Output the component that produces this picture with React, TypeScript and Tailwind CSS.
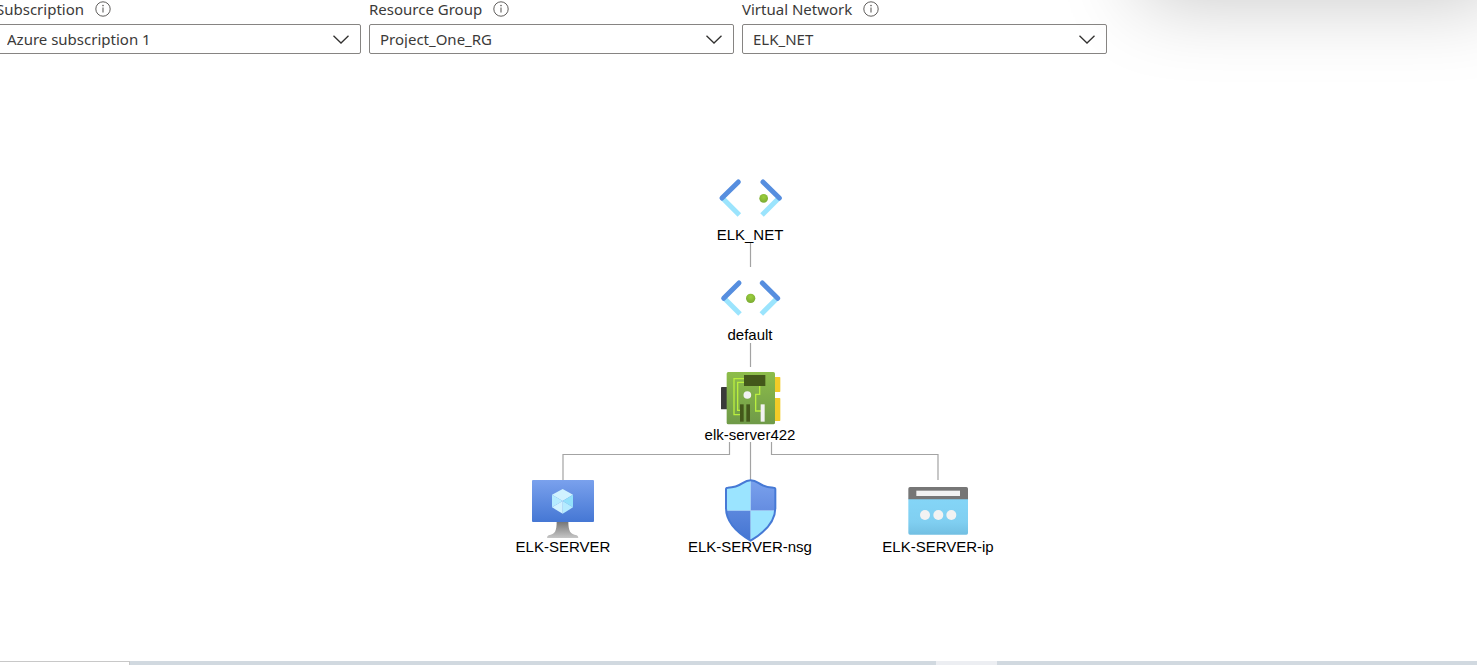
import type { ReactNode } from "react";

function InfoIcon() {
  return (
    <svg viewBox="0 0 16 16" className="h-4 w-4" fill="none" aria-hidden="true">
      <circle cx="8" cy="8" r="7.2" stroke="#605e5c" strokeWidth="1" />
      <path d="M8 6.500V11.500" stroke="#605e5c" strokeWidth="1.1" />
      <circle cx="8" cy="4.600" r="0.8" fill="#605e5c" />
    </svg>
  );
}

function Field({ id, label, value }: { id: string; label: string; value: string }) {
  return (
    <div className="w-[365px] shrink-0">
      <div className="mb-[7px] flex h-[17px] items-center gap-[11px]">
        <label htmlFor={id} className="text-[15px] leading-4 text-[#3b3a39]">
          {label}
        </label>
        <InfoIcon />
      </div>
      <div className="relative">
        <select
          id={id}
          defaultValue={value}
          className="block h-[30px] w-full appearance-none rounded-[2px] border border-[#868482] bg-transparent pr-10 pl-[10px] text-[15px] leading-[18px] text-[#3b3a39]"
        >
          <option>{value}</option>
        </select>
        <svg
          viewBox="0 0 16 9"
          className="pointer-events-none absolute top-[11px] right-3 h-[9px] w-4"
          fill="none"
          aria-hidden="true"
        >
          <path d="M0.5 0.7L8 8L15.500 0.7" stroke="#323130" strokeWidth="1.3" />
        </svg>
      </div>
    </div>
  );
}

function VirtualNetworkIcon() {
  return (
    <svg viewBox="84 6 192 162" className="h-[54px] w-16" aria-hidden="true">
      <g fill="none" strokeWidth="15">
        <path d="M97 84L148 135" stroke="#9be4fd" />
        <path d="M267 84L216 135" stroke="#9be4fd" />
        <g stroke="#568edf" strokeLinecap="round">
          <path d="M96 84L145 36" />
          <path d="M268 84L219 36" />
        </g>
      </g>
      <circle cx="221" cy="85" r="13" fill="url(#dot)" />
    </svg>
  );
}

function SubnetIcon() {
  return (
    <svg viewBox="84 6 192 162" className="h-[54px] w-16" aria-hidden="true">
      <g fill="none" strokeWidth="15">
        <path d="M102 84L150 132" stroke="#9be4fd" />
        <path d="M262 84L214 132" stroke="#9be4fd" />
        <g stroke="#568edf" strokeLinecap="round">
          <path d="M101 85L147 39" />
          <path d="M263 85L217 39" />
        </g>
      </g>
      <circle cx="182" cy="85" r="14" fill="url(#dot)" />
    </svg>
  );
}

function NetworkInterfaceIcon() {
  return (
    <svg viewBox="84 21 192 162" className="h-[54px] w-16" aria-hidden="true">
      <rect x="93" y="66" width="22" height="67" rx="2" fill="#3a3a3a" />
      <rect x="248" y="36" width="23" height="45" rx="2" fill="#f2cb28" />
      <rect x="248" y="99" width="23" height="69" rx="2" fill="#f2cb28" />
      <rect x="110" y="21" width="145" height="157" rx="5" fill="url(#board)" />
      <g fill="none" stroke="#b9ee3f" strokeWidth="4">
        <path d="M162 41H132V149H152" />
        <path d="M162 52H143V136H152" />
        <path d="M209 62V88H197V138H213" />
      </g>
      <rect x="162" y="30" width="64" height="33" fill="#43581a" />
      <rect x="150" y="118" width="11" height="52" fill="#43581a" />
      <rect x="169" y="118" width="11" height="52" fill="#43581a" />
      <rect x="212" y="118" width="12" height="52" fill="#f2f2f2" />
      <circle cx="172" cy="90" r="11.500" fill="#f2f2f2" />
    </svg>
  );
}

function VirtualMachineIcon() {
  return (
    <svg viewBox="78 114 192 180" className="h-[60px] w-16" aria-hidden="true">
      <path d="M155 244H190C190 274 196 283 215 286Q220 288 220 294H126Q126 288 131 286C150 283 155 274 155 244Z" fill="url(#stand)" />
      <rect x="81" y="120" width="186" height="126" rx="3" fill="url(#screen)" />
      <path d="M173 147L204 164L173 183L141 164Z" fill="#d0f2ff" />
      <path d="M141 164L173 183L141 202Z" fill="#b5ebff" />
      <path d="M204 164V202L173 183Z" fill="#92e1fb" />
      <path d="M173 183L204 202L173 221Z" fill="#b5ebff" />
      <path d="M173 183L141 202L173 221Z" fill="#d0f2ff" />
    </svg>
  );
}

const SHIELD =
  "M212 121C186 121 188 142 143 143Q138 143 138 148V204C138 253 185 286 212 302C239 286 286 253 286 204V148Q286 143 281 143C236 142 238 121 212 121Z";

function SecurityGroupIcon() {
  return (
    <svg viewBox="114 114 192 180" className="h-[60px] w-16 overflow-visible" aria-hidden="true">
      <clipPath id="shield">
        <path d={SHIELD} />
      </clipPath>
      <g clipPath="url(#shield)">
        <rect x="134" y="116" width="78" height="96" fill="#9be4ff" />
        <rect x="212" y="116" width="78" height="96" fill="url(#shieldTop)" />
        <rect x="134" y="212" width="78" height="94" fill="url(#shieldBottom)" />
        <rect x="212" y="212" width="78" height="94" fill="#9be4ff" />
      </g>
      <path d={SHIELD} fill="none" stroke="#4679d5" strokeWidth="6" />
    </svg>
  );
}

function PublicIpIcon() {
  return (
    <svg viewBox="108 114 192 180" className="h-[60px] w-16" aria-hidden="true">
      <path d="M115 176H294V279Q294 284 289 284H120Q115 284 115 279Z" fill="url(#panel)" />
      <path d="M115 178V146Q115 141 120 141H289Q294 141 294 146V178Z" fill="#767676" />
      <rect x="139" y="152" width="131" height="16" fill="#f2f2f2" />
      <g fill="#f2f2f2">
        <circle cx="165" cy="225" r="15" />
        <circle cx="205" cy="225" r="15" />
        <circle cx="244" cy="225" r="15" />
      </g>
    </svg>
  );
}

function Node({ place, label, children }: { place: string; label: string; children: ReactNode }) {
  return (
    <div className={`absolute flex w-40 flex-col items-center ${place}`}>
      {children}
      <span className="relative text-[15px] leading-[18px] whitespace-nowrap text-black">{label}</span>
    </div>
  );
}

function Connectors() {
  return (
    <svg viewBox="0 0 540 390" className="absolute top-0 left-0 h-[390px] w-[540px]" aria-hidden="true">
      <defs>
        <radialGradient id="dot" cx="0.5" cy="0.35" r="0.7">
          <stop offset="0" stopColor="#9bcf3d" />
          <stop offset="1" stopColor="#78a832" />
        </radialGradient>
        <linearGradient id="board" x1="0" y1="0" x2="0" y2="1">
          <stop offset="0" stopColor="#8dbd4a" />
          <stop offset="1" stopColor="#6f9a48" />
        </linearGradient>
        <linearGradient id="screen" x1="0" y1="0" x2="0" y2="1">
          <stop offset="0" stopColor="#7aa1ed" />
          <stop offset="1" stopColor="#4577d4" />
        </linearGradient>
        <linearGradient id="stand" x1="0" y1="0" x2="0" y2="1">
          <stop offset="0" stopColor="#747474" />
          <stop offset="1" stopColor="#c6c6c6" />
        </linearGradient>
        <linearGradient id="shieldTop" x1="0" y1="0" x2="0" y2="1">
          <stop offset="0" stopColor="#7ba2ed" />
          <stop offset="1" stopColor="#658de1" />
        </linearGradient>
        <linearGradient id="shieldBottom" x1="0" y1="0" x2="0" y2="1">
          <stop offset="0" stopColor="#5b87dd" />
          <stop offset="1" stopColor="#4374d1" />
        </linearGradient>
        <linearGradient id="panel" x1="0" y1="0" x2="0" y2="1">
          <stop offset="0" stopColor="#84d5f7" />
          <stop offset="0.65" stopColor="#80cff1" />
          <stop offset="1" stopColor="#72bfe2" />
        </linearGradient>
      </defs>
      <g fill="none" stroke="#a3a3a3" strokeWidth="1.200">
        <path d="M270.500 71V95" />
        <path d="M270.500 171V195" />
        <path d="M270.500 270V308" />
        <path d="M249.500 270V282.500H83V308" />
        <path d="M291.500 270V282.500H458V308" />
      </g>
    </svg>
  );
}

export default function App() {
  return (
    <div className="relative flex min-h-screen flex-col overflow-hidden bg-white font-['Liberation_Sans',Arial,sans-serif]">
      <div className="pointer-events-none absolute -top-[224px] -right-6 h-[200px] w-[361px] shadow-[0_26px_80px_rgba(0,0,0,0.22)]" />

      <form className="relative -ml-1 flex gap-2 font-['Noto_Sans','Open_Sans',sans-serif]">
        <Field id="subscription" label="Subscription" value="Azure subscription 1" />
        <Field id="resource-group" label="Resource Group" value="Project_One_RG" />
        <Field id="virtual-network" label="Virtual Network" value="ELK_NET" />
      </form>

      <main className="mt-[118px] flex flex-1 justify-center pl-[23px]">
        <div className="relative h-[390px] w-[540px] shrink-0">
          <Connectors />
          <Node place="top-0 left-[190px]" label="ELK_NET">
            <VirtualNetworkIcon />
          </Node>
          <Node place="top-[100px] left-[190px]" label="default">
            <SubnetIcon />
          </Node>
          <Node place="top-[200px] left-[190px]" label="elk-server422">
            <NetworkInterfaceIcon />
          </Node>
          <Node place="top-[306px] left-[3px]" label="ELK-SERVER">
            <VirtualMachineIcon />
          </Node>
          <Node place="top-[306px] left-[190px]" label="ELK-SERVER-nsg">
            <SecurityGroupIcon />
          </Node>
          <Node place="top-[306px] left-[378px]" label="ELK-SERVER-ip">
            <PublicIpIcon />
          </Node>
        </div>
      </main>

      <footer className="flex h-1 bg-[#d1d9e0]">
        <div className="w-[130px] border-t border-r border-[#c8c8c8] bg-white" />
        <div className="flex-1" />
        <div className="w-[61px] bg-[#eceef2]" />
        <div className="w-[480px]" />
      </footer>
    </div>
  );
}
